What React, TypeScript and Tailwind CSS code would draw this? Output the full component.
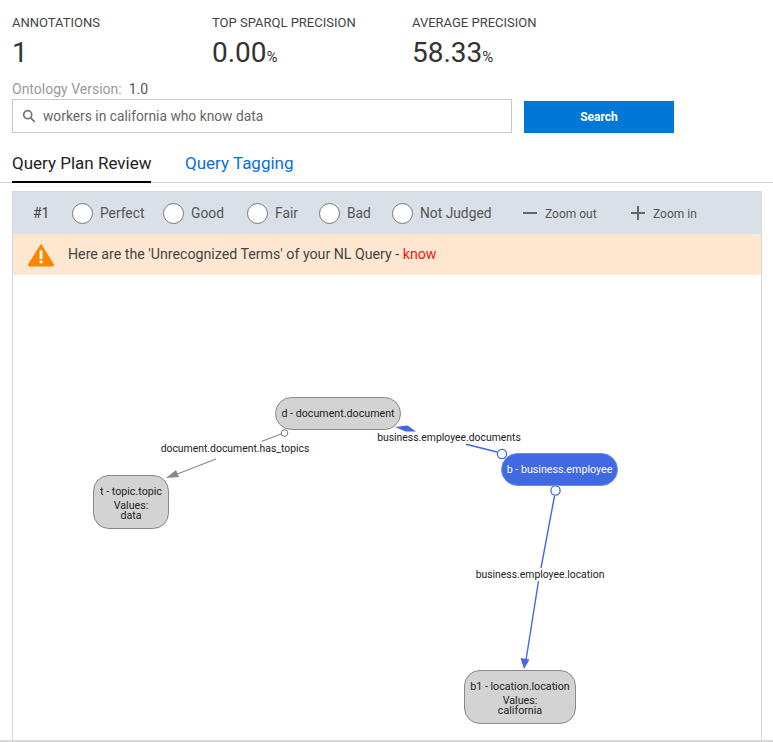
const font = { fontFamily: '"Roboto", "Liberation Sans", sans-serif' };

function Stat({ label, value, unit, width }: { label: string; value: string; unit?: string; width: string }) {
  return (
    <div className={`${width} shrink-0`}>
      <div className="text-[13px] leading-[16px] text-[#444]">{label}</div>
      <div className="mt-[4px] h-[36px] text-[28px] leading-[36px] text-[#333]">
        {value}
        {unit && <span className="text-[15px]">{unit}</span>}
      </div>
    </div>
  );
}

function Radio({ label, width }: { label: string; width: string }) {
  return (
    <div className={`flex items-center gap-[7px] ${width} shrink-0`}>
      <span className="h-[21px] w-[21px] shrink-0 rounded-full border border-[#777] bg-white" />
      <span className="text-[13.8px] text-[#555]">{label}</span>
    </div>
  );
}

function Node({ className, children }: { className: string; children: React.ReactNode }) {
  return (
    <div className={`absolute flex flex-col items-center justify-center border text-center text-[10.7px] leading-[10px] ${className}`}>
      {children}
    </div>
  );
}

function EdgeLabel({ className, children }: { className: string; children: React.ReactNode }) {
  return (
    <div className={`absolute whitespace-nowrap bg-white text-[10.4px] leading-[13px] text-[#222] ${className}`}>{children}</div>
  );
}

export default function App() {
  return (
    <div className="h-[742px] w-[773px] overflow-hidden bg-white" style={font}>
      <div className="flex px-[12px] pt-[15px]">
        <Stat label="ANNOTATIONS" value="1" width="w-[200px]" />
        <Stat label="TOP SPARQL PRECISION" value="0.00" unit="%" width="w-[200px]" />
        <Stat label="AVERAGE PRECISION" value="58.33" unit="%" width="w-[200px]" />
      </div>

      <div className="mt-[10px] flex gap-[7px] px-[12px] text-[14px] leading-[16px]">
        <span className="text-[#999]">Ontology Version:</span>
        <span className="text-[#555]">1.0</span>
      </div>

      <div className="mt-[2px] flex items-start gap-[12px] px-[12px]">
        <div className="flex h-[34px] w-[500px] items-center border border-[#c8c8c8] pl-[9px]">
          <svg width="14" height="14" viewBox="0 0 14 14" fill="none" stroke="#777" strokeWidth="1.7">
            <circle cx="5.7" cy="5.7" r="4" />
            <path d="M8.6 8.6 12.6 12.8" />
          </svg>
          <span className="ml-[7px] pt-[1px] text-[13.8px] text-[#666]">workers in california who know data</span>
        </div>
        <button className="mt-[2px] flex h-[32px] w-[150px] items-center justify-center bg-[#0078d7] text-[12px] font-bold text-white">
          Search
        </button>
      </div>

      <div className="mt-[18px] flex h-[32px] gap-[34px] border-b border-[#d4d4d4] px-[12px] text-[17px]">
        <div className="h-[32px] w-[139px] whitespace-nowrap border-b-2 border-black leading-[24px] text-[#222]">Query Plan Review</div>
        <div className="whitespace-nowrap leading-[24px] text-[#0a6ed8]">Query Tagging</div>
      </div>

      <div className="ml-[12px] mt-[8px] flex h-[549px] w-[750px] flex-col border-x border-t border-[#d8d8d8]">
        <div className="flex h-[42px] shrink-0 items-center bg-[#dae0e7] pl-[20px]">
          <span className="w-[39px] shrink-0 text-[14px] text-[#444]">#1</span>
          <Radio label="Perfect" width="w-[91px]" />
          <Radio label="Good" width="w-[84px]" />
          <Radio label="Fair" width="w-[72px]" />
          <Radio label="Bad" width="w-[73px]" />
          <Radio label="Not Judged" width="w-[131px]" />
          <div className="flex w-[108px] shrink-0 items-center gap-[8px]">
            <svg width="14" height="14" viewBox="0 0 14 14" fill="#666"><rect x="0" y="6" width="14" height="2" /></svg>
            <span className="pt-[1px] text-[12px] text-[#555]">Zoom out</span>
          </div>
          <div className="flex items-center gap-[8px]">
            <svg width="14" height="14" viewBox="0 0 14 14" fill="#666"><rect x="0" y="6" width="14" height="2" /><rect x="6" y="0" width="2" height="14" /></svg>
            <span className="pt-[1px] text-[12px] text-[#555]">Zoom in</span>
          </div>
        </div>

        <div className="flex h-[41px] shrink-0 items-center bg-[#fee7d0] pl-[14px] text-[14.2px] text-[#444]">
          <svg width="28" height="24" viewBox="0 0 28 24">
            <path d="M14 1.5 26.5 21.5a1 1 0 0 1-.9 1.5H2.4a1 1 0 0 1-.9-1.5Z" fill="#ff8400" stroke="#ff8400" strokeWidth="1" strokeLinejoin="round" />
            <rect x="12.6" y="7.5" width="2.8" height="8.5" fill="#fff" />
            <rect x="12.6" y="17.5" width="2.8" height="2.8" fill="#fff" />
          </svg>
          <span className="ml-[13px] pt-[1px]">Here are the 'Unrecognized Terms' of your NL Query - <span className="text-[#f01818]">know</span></span>
        </div>

        <div className="relative flex-1 overflow-hidden text-[#222]">
          <EdgeLabel className="left-[147px] top-[167px] w-[150px] text-center">document.document.has_topics</EdgeLabel>
          <EdgeLabel className="left-[364px] top-[156px] w-[144px] text-center">business.employee.documents</EdgeLabel>
          <EdgeLabel className="left-[462px] top-[293px] w-[130px] text-center">business.employee.location</EdgeLabel>

          <svg className="absolute left-0 top-0" width="748" height="466" viewBox="13 275 748 466" fill="none">
            <path d="M281 434 262 441.3M216 459 176 474.5" stroke="#888" strokeWidth="1.2" />
            <path d="M166 478 176 470 179 477Z" fill="#888" />
            <circle cx="284.5" cy="433" r="3.3" fill="#fff" stroke="#777" />
            <path d="M497 452 466 444.2" stroke="#4169e1" strokeWidth="1.4" />
            <path d="M395 427 407.7 425.5 416 431.5 405.5 431.5Z" fill="#4169e1" />
            <circle cx="502" cy="454" r="4.6" fill="#fff" stroke="#4169e1" strokeWidth="1.3" />
            <path d="M554.5 496 541 568M538.5 581 526 660" stroke="#4169e1" strokeWidth="1.4" />
            <path d="M524 669 520.5 658 529.5 659.5Z" fill="#4169e1" />
            <circle cx="555.5" cy="490.5" r="4.6" fill="#fff" stroke="#4169e1" strokeWidth="1.3" />
          </svg>

          <Node className="left-[262px] top-[122px] h-[33px] w-[126px] rounded-[17px] border-[#888] bg-[#d3d3d3] text-[#222]">d - document.document</Node>
          <Node className="left-[80px] top-[200px] h-[54px] w-[76px] rounded-[16px] border-[#888] bg-[#d3d3d3] pt-[2px] text-[#222]">
            <span className="mb-[3px] leading-[12px]">t - topic.topic</span>
            <span>Values:</span>
            <span>data</span>
          </Node>
          <Node className="left-[488px] top-[178px] h-[33px] w-[117px] rounded-[17px] border-[#6f8de8] bg-[#4169e1] text-white">b - business.employee</Node>
          <Node className="left-[451px] top-[395px] h-[54px] w-[112px] rounded-[16px] border-[#888] bg-[#d3d3d3] pt-[2px] text-[#222]">
            <span className="mb-[3px] leading-[12px]">b1 - location.location</span>
            <span>Values:</span>
            <span>california</span>
          </Node>
        </div>
      </div>
      <div className="h-[2px] w-full bg-[#d8d8d8]" />
    </div>
  );
}
